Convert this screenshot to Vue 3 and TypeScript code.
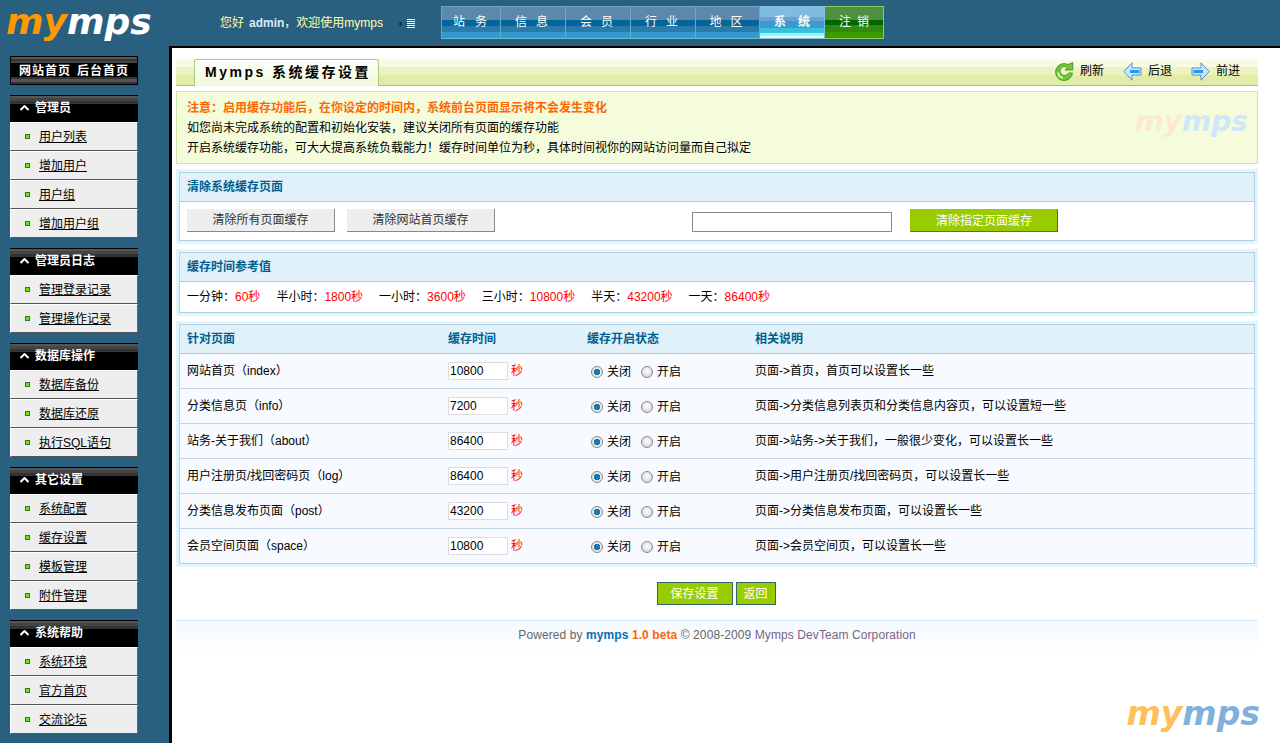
<script setup lang="ts">
const navs = [
  { t: '站务', w: 60, ls: 10, ind: 8 },
  { t: '信息', w: 65, ls: 9, ind: 6 },
  { t: '会员', w: 65, ls: 9, ind: 6 },
  { t: '行业', w: 65, ls: 9, ind: 6 },
  { t: '地区', w: 64, ls: 9, ind: 6 },
  { t: '系统', w: 65, ls: 12, ind: 12, cls: 'active' },
  { t: '注销', w: 59, ls: 6, ind: 6, cls: 'logout' },
]
const groups = [
  { title: '管理员', items: ['用户列表', '增加用户', '用户组', '增加用户组'] },
  { title: '管理员日志', items: ['管理登录记录', '管理操作记录'] },
  { title: '数据库操作', items: ['数据库备份', '数据库还原', '执行SQL语句'] },
  { title: '其它设置', items: ['系统配置', '缓存设置', '模板管理', '附件管理'] },
  { title: '系统帮助', items: ['系统环境', '官方首页', '交流论坛'] },
]
const refs = [
  ['一分钟：', '60秒'],
  ['半小时：', '1800秒'],
  ['一小时：', '3600秒'],
  ['三小时：', '10800秒'],
  ['半天：', '43200秒'],
  ['一天：', '86400秒'],
]
const rows = [
  { name: '网站首页（index）', v: '10800', note: '页面->首页，首页可以设置长一些' },
  { name: '分类信息页（info）', v: '7200', note: '页面->分类信息列表页和分类信息内容页，可以设置短一些' },
  { name: '站务-关于我们（about）', v: '86400', note: '页面->站务->关于我们，一般很少变化，可以设置长一些' },
  { name: '用户注册页/找回密码页（log）', v: '86400', note: '页面->用户注册页/找回密码页，可以设置长一些' },
  { name: '分类信息发布页面（post）', v: '43200', note: '页面->分类信息发布页面，可以设置长一些' },
  { name: '会员空间页面（space）', v: '10800', note: '页面->会员空间页，可以设置长一些' },
]
</script>

<template>
  <div class="page">
    <header class="top">
      <div class="logo-wrap"><span class="logo"><span class="my">my</span><span class="mps">mps</span></span></div>
      <div class="welcome">
        <span>您好<b class="admin">admin</b>，欢迎使用mymps</span>
        <svg class="menu-ic" width="18" height="10" viewBox="0 0 18 10">
          <path d="M3.5 2.5 L0.5 5 L3.5 7.5Z" fill="#0b2a3d" />
          <path d="M9 .5h8M9 2.5h8M9 4.5h8M9 6.5h8M9 8.5h8" stroke="#fff" stroke-width="1" />
        </svg>
      </div>
      <nav class="nav">
        <a v-for="n in navs" :key="n.t" class="nav-item" :class="n.cls" :style="{ width: n.w + 'px', letterSpacing: n.ls + 'px', textIndent: n.ind + 'px' }">{{ n.t }}</a>
      </nav>
    </header>

    <div class="body">
      <aside class="side">
        <div class="quick"><a>网站首页</a><a>后台首页</a></div>
        <section v-for="g in groups" :key="g.title" class="group">
          <h3 class="group-head">
            <svg width="9" height="6" viewBox="0 0 9 6"><path d="M0.5 5 L4.5 1 L8.5 5" fill="none" stroke="#fff" stroke-width="2" /></svg>
            {{ g.title }}
          </h3>
          <div v-for="i in g.items" :key="i" class="group-item"><i class="dot"></i><a>{{ i }}</a></div>
        </section>
      </aside>

      <main class="main">
        <div class="title-bar">
          <h1 class="tab">Mymps 系统缓存设置</h1>
          <div class="tools">
            <span class="tool">
              <svg width="19" height="19" viewBox="0 0 19 19">
                <path d="M17.5 11 A8.5 8.5 0 1 1 13 2.5 L17.8 .5 L17.8 8 L10 8 L12.5 5.6 A4.5 4.5 0 1 0 13.5 11Z" fill="#72c43e" stroke="#4e9e26" stroke-width="1" stroke-linejoin="round" />
                <path d="M3.2 10.5 A6 6 0 0 0 8 16" fill="none" stroke="#d8f5c0" stroke-width="2" />
              </svg>刷新
            </span>
            <span class="tool">
              <svg width="19" height="19" viewBox="0 0 19 19">
                <path d="M9 .8 L.8 9.5 L9 18.2 V13 H18 V6 H9Z" fill="#cfe6fa" stroke="#5b8fc2" stroke-width="1" />
                <path d="M7 9.5 H16.5" stroke="#1e9bf0" stroke-width="3" />
              </svg>后退
            </span>
            <span class="tool">
              <svg width="19" height="19" viewBox="0 0 19 19">
                <path d="M10 .8 L18.2 9.5 L10 18.2 V13 H1 V6 H10Z" fill="#cfe6fa" stroke="#5b8fc2" stroke-width="1" />
                <path d="M2.5 9.5 H12" stroke="#1e9bf0" stroke-width="3" />
              </svg>前进
            </span>
          </div>
        </div>

        <div class="notice">
          <p class="warn">注意：启用缓存功能后，在你设定的时间内，系统前台页面显示将不会发生变化</p>
          <p>如您尚未完成系统的配置和初始化安装，建议关闭所有页面的缓存功能</p>
          <p>开启系统缓存功能，可大大提高系统负载能力！缓存时间单位为秒，具体时间视你的网站访问量而自己拟定</p>
          <span class="watermark"><span class="my">my</span><span class="mps">mps</span></span>
        </div>

        <section class="panel">
          <div class="panel-inner">
            <h2 class="panel-head">清除系统缓存页面</h2>
            <div class="clear-row">
              <button class="gray-btn">清除所有页面缓存</button>
              <button class="gray-btn">清除网站首页缓存</button>
              <input class="url-input" type="text" />
              <button class="green-btn wide">清除指定页面缓存</button>
            </div>
          </div>
        </section>

        <section class="panel">
          <div class="panel-inner">
            <h2 class="panel-head">缓存时间参考值</h2>
            <div class="ref-row">
              <span v-for="r in refs" :key="r[0]">{{ r[0] }}<em>{{ r[1] }}</em></span>
            </div>
          </div>
        </section>

        <section class="panel">
          <div class="panel-inner">
            <table class="cache-table">
              <colgroup>
                <col class="c1" /><col class="c2" /><col class="c3" /><col />
              </colgroup>
              <thead>
                <tr><th>针对页面</th><th>缓存时间</th><th>缓存开启状态</th><th>相关说明</th></tr>
              </thead>
              <tbody>
                <tr v-for="(r, idx) in rows" :key="r.name">
                  <td>{{ r.name }}</td>
                  <td class="time"><input class="sec" type="text" :value="r.v" /><em class="unit">秒</em></td>
                  <td class="state">
                    <label><input type="radio" :name="'s' + idx" checked />关闭</label>
                    <label><input type="radio" :name="'s' + idx" />开启</label>
                  </td>
                  <td>{{ r.note }}</td>
                </tr>
              </tbody>
            </table>
          </div>
        </section>

        <div class="actions">
          <button class="green-btn save">保存设置</button>
          <button class="green-btn back">返回</button>
        </div>

        <footer class="foot">
          Powered by <b class="f-blue">mymps</b> <b class="f-orange">1.0 beta</b> © 2008-2009 <span class="f-purple">Mymps DevTeam Corporation</span>
        </footer>

        <span class="corner"><span class="my">my</span><span class="mps">mps</span></span>
      </main>
    </div>
  </div>
</template>

<style>
html, body { margin: 0; background: #296080; overflow: hidden; }
</style>

<style scoped>
.page {
  width: 1280px;
  height: 743px;
  background: #296080;
  font: 12px/1 "Liberation Sans", "Noto Sans CJK SC", sans-serif;
  color: #000;
  overflow: hidden;
}
.top { display: flex; height: 46px; }
.logo-wrap { width: 220px; padding: 4px 0 0 6px; box-sizing: border-box; }
.logo, .watermark, .corner {
  font-family: "DejaVu Sans", sans-serif;
  font-weight: bold;
  font-style: italic;
  white-space: nowrap;
}
.logo { display: block; font-size: 36px; line-height: 36px; }
.logo .my { color: #f90; }
.logo .mps { color: #fff; }
.welcome {
  width: 221px;
  padding-top: 16px;
  box-sizing: border-box;
  color: #ffffaa;
  line-height: 14px;
  display: flex;
  align-items: flex-start;
  white-space: nowrap;
}
.welcome .admin { color: #d6ecff; margin-left: 5px; }
.menu-ic { margin: 3px 0 0 15px; }
.nav {
  display: flex;
  height: 33px;
  margin-top: 6px;
  box-sizing: border-box;
}
.nav-item {
  box-sizing: border-box;
  height: 33px;
  color: #fff;
  text-align: center;
  line-height: 31px;
  white-space: nowrap;
  border: 1px solid #6aa6cf;
  border-bottom-color: #62c0d6;
  border-left-width: 0;
  background: linear-gradient(#5c88ab 0 13px, #00669c 13px 19px, #2a7aaa 19px 25px, #3399cc 25px);
}
.nav-item:first-child { border-left-width: 1px; }
.nav-item.active {
  font-weight: bold;
  border-color: #7fbfe0;
  background: linear-gradient(#7fbce0 0 10px, #6c9fd4 10px 14px, #3a9bd0 14px 21px, #38c0dc 21px 26px, #9cf0f8 26px 29px, #d8fcff 29px);
}
.nav-item.logout {
  border-color: #8ecc60;
  background: linear-gradient(#4f9040 0 13px, #006600 13px 18px, #2f8a10 18px 25px, #3a9a00 25px);
}
.body { display: flex; height: 697px; }
.side { width: 169px; padding: 10px 0 0 10px; box-sizing: border-box; flex: none; }
.quick {
  width: 128px;
  height: 29px;
  box-sizing: border-box;
  border: 1px solid #000;
  background: linear-gradient(#555 0 2px, #333 2px 4px, #444 4px 6px, #000 6px 20px, #333 20px 22px, #555 22px 25px, #333 25px);
  color: #fff;
  font-weight: bold;
  letter-spacing: 1px;
  display: flex;
  justify-content: center;
  gap: 6px;
  line-height: 28px;
}
.group { width: 128px; margin-top: 10px; }
.group-head {
  margin: 0;
  height: 27px;
  box-sizing: border-box;
  padding: 6px 0 0 10px;
  font-size: 12px;
  line-height: 14px;
  font-weight: bold;
  color: #fff;
  background: linear-gradient(#000 0 1px, #555 1px 3px, #444 3px 6px, #333 6px 9px, #000 9px);
  display: flex;
  align-items: flex-start;
  gap: 6px;
}
.group-head svg { margin-top: 4px; }
.group-item {
  height: 29px;
  box-sizing: border-box;
  background: #eee;
  border-left: 1px solid #fff;
  border-right: 1px solid #666;
  border-top: 1px solid #fff;
  border-bottom: 1px solid #555;
  display: flex;
  align-items: center;
  padding-left: 14px;
  gap: 9px;
}
.group-item a { color: #000; text-decoration: underline; line-height: 14px; }
.dot {
  width: 5px;
  height: 5px;
  box-sizing: border-box;
  background: #66ee00;
  border: 1px solid #2a7a20;
  flex: none;
}
.main {
  position: relative;
  flex: 1;
  box-sizing: border-box;
  background: #fff;
  border-left: 3px solid #000;
  border-top: 2px solid #000;
  padding: 9px 22px 0 4px;
}
.title-bar {
  height: 29px;
  box-sizing: border-box;
  border-bottom: 1px solid #99cc66;
  padding-left: 18px;
  display: flex;
  align-items: flex-end;
  justify-content: space-between;
  background: linear-gradient(#fff 0, #f7fbe4 4px, #f7fbe4 10px, #ecf3c0 10px 18px, #e1eda6 18px);
}
.tab {
  margin: 0 0 -1px;
  width: 185px;
  height: 27px;
  box-sizing: border-box;
  border: 1px solid #a3d07c;
  border-bottom: none;
  border-radius: 3px 3px 0 0;
  background: linear-gradient(#fff, #f2f9d8);
  font-size: 14px;
  font-weight: bold;
  letter-spacing: 2.5px;
  line-height: 24px;
  padding-left: 10px;
  white-space: nowrap;
}
.tools { display: flex; align-self: center; padding-right: 18px; gap: 19px; }
.tool { display: flex; align-items: center; gap: 6px; }
.notice {
  position: relative;
  height: 73px;
  margin-top: 5px;
  box-sizing: border-box;
  background: #f4fcdc;
  border: 1px solid #cce6a8;
  padding: 6px 0 0 10px;
}
.notice p { margin: 0; line-height: 20px; }
.notice .warn { color: #ff6600; font-weight: bold; }
.watermark {
  position: absolute;
  right: 9px;
  top: 13px;
  font-size: 28px;
  line-height: 34px;
}
.watermark .my { color: #fce9d2; }
.watermark .mps { color: #d0e6fa; }
.panel {
  margin-top: 5px;
  padding: 3px;
  background: #e0f6ff;
}
.panel-inner { border: 1px solid #b4cfe2; background: #fff; }
.panel-head {
  margin: 0;
  height: 29px;
  box-sizing: border-box;
  font-size: 12px;
  font-weight: bold;
  color: #005f8f;
  line-height: 28px;
  padding-left: 7px;
  background: #e0f1fa;
  border-bottom: 1px solid #afcbe2;
}
.clear-row {
  height: 38px;
  box-sizing: border-box;
  display: flex;
  align-items: flex-start;
  padding: 7px 0 0 7px;
}
button {
  font: inherit;
  padding: 0;
  margin: 0;
  cursor: pointer;
}
.gray-btn {
  width: 148px;
  height: 23px;
  margin-right: 12px;
  background: #eee;
  color: #333;
  border: 0;
  border-right: 1px solid #888;
  border-bottom: 1px solid #888;
}
.url-input {
  width: 200px;
  height: 20px;
  margin: 3px 18px 0 185px;
  box-sizing: border-box;
  border: 1px solid #888;
  padding: 0;
  background: #fff;
}
.green-btn {
  height: 23px;
  background: #99cc00;
  color: #fff;
  border: 1px solid #9c0;
  border-right-color: #336666;
  border-bottom-color: #3a7a50;
}
.wide { width: 148px; }
.ref-row {
  height: 30px;
  box-sizing: border-box;
  display: flex;
  gap: 16px;
  align-items: center;
  padding-left: 7px;
}
.ref-row em, .unit { color: #f00; font-style: normal; }
.cache-table {
  width: 100%;
  border-collapse: separate;
  border-spacing: 0;
  table-layout: fixed;
  background: #f7fbff;
}
.c1 { width: 261px; }
.c2 { width: 139px; }
.c3 { width: 168px; }
.cache-table th {
  height: 29px;
  box-sizing: border-box;
  text-align: left;
  color: #005f8f;
  padding: 0 0 1px 7px;
  background: #e0f1fa;
  border-bottom: 1px solid #afcbe2;
  font-size: 12px;
}
.cache-table td {
  height: 35px;
  box-sizing: border-box;
  padding: 0 0 1px 7px;
  border-bottom: 1px solid #c4d9e8;
  white-space: nowrap;
}
.cache-table tr:last-child td { border-bottom: 0; height: 34px; }
.cache-table .time { padding-bottom: 0; }
.sec {
  width: 60px;
  height: 18px;
  box-sizing: border-box;
  border: 1px solid #ddd;
  background: #fff;
  font: 12px "Liberation Sans", sans-serif;
  padding: 0 1px;
  vertical-align: middle;
}
.unit { margin-left: 3px; vertical-align: middle; }
.cache-table .state { padding-top: 4px; padding-bottom: 0; }
.state label { display: inline-flex; align-items: center; margin-left: 4px; margin-right: 6px; }
.state input {
  appearance: none;
  width: 12px;
  height: 12px;
  margin: 0 4px 0 0;
  border-radius: 50%;
  border: 1px solid #888;
  background: radial-gradient(circle at 50% 40%, #fff, #ccc);
}
.state input:checked {
  background: radial-gradient(circle, #1a78b0 0 3px, #e8e8e8 3.5px);
}
.actions {
  display: flex;
  justify-content: center;
  gap: 3px;
  margin-top: 15px;
  padding-right: 2px;
}
.save { width: 76px; }
.back { width: 40px; }
.actions .green-btn { border: 1px solid #336666; }
.foot {
  margin-top: 15px;
  height: 35px;
  box-sizing: border-box;
  border-top: 1px solid #d4e8f8;
  background: linear-gradient(#f4fafe, #fff);
  text-align: center;
  color: #666;
  padding-top: 7px;
  line-height: 14px;
  letter-spacing: .09px;
}
.f-blue { color: #0a6fae; }
.f-orange { color: #ff6600; }
.f-purple { color: #7a6488; }
.corner {
  position: absolute;
  right: 20px;
  bottom: 12px;
  font-size: 33px;
  line-height: 34px;
}
.corner .my { color: #ffc05c; }
.corner .mps { color: #80b0dc; }
</style>
